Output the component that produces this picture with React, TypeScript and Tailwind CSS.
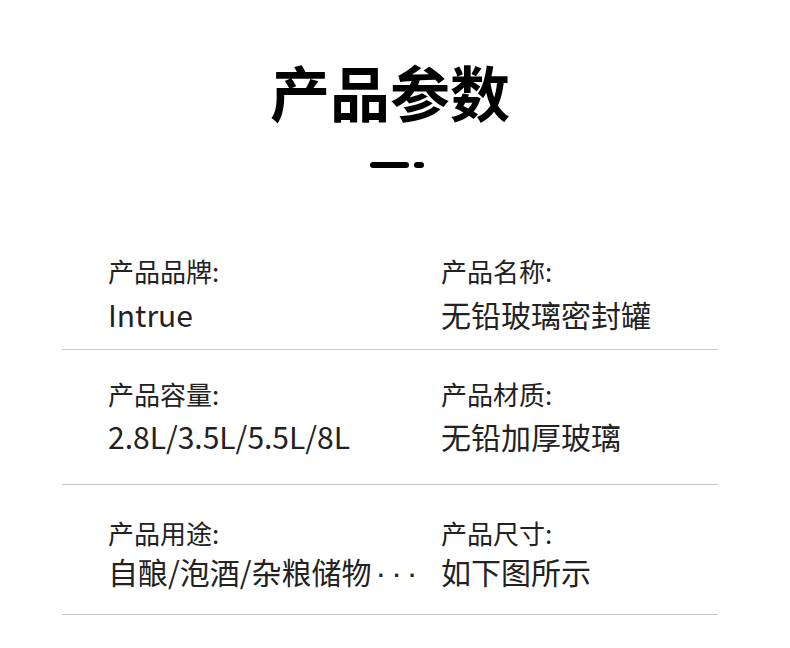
const ROWS = [
  {
    pad: 'pt-0 pb-[15px]',
    gap: 'mt-[7px]',
    cells: [
      { label: '产品品牌:', value: 'Intrue' },
      { label: '产品名称:', value: '无铅玻璃密封罐' },
    ],
  },
  {
    pad: 'pt-[28px] pb-[28px]',
    gap: 'mt-[6px]',
    cells: [
      { label: '产品容量:', value: '2.8L/3.5L/5.5L/8L' },
      { label: '产品材质:', value: '无铅加厚玻璃' },
    ],
  },
  {
    pad: 'pt-[32px] pb-[23px]',
    gap: 'mt-[2px]',
    cells: [
      { label: '产品用途:', value: '自酿/泡酒/杂粮储物', more: true },
      { label: '产品尺寸:', value: '如下图所示' },
    ],
  },
]

export default function App() {
  return (
    <div
      className="w-[790px] h-[648px] bg-white text-[#222] overflow-hidden"
      style={{ fontFamily: '"Noto Sans CJK SC", "Noto Sans", sans-serif' }}
    >
      <div className="flex flex-col items-center pt-[58px]">
        <h1 className="text-[60px] leading-[66px] font-bold text-black pr-[10px]">产品参数</h1>
        <div className="mt-[38px] flex items-center gap-[5px] ml-[4px]">
          <span className="block w-[39px] h-[6px] rounded-full bg-black" />
          <span className="block w-[10px] h-[6px] rounded-full bg-black" />
        </div>
      </div>

      <div className="ml-[62px] mr-[72px] mt-[87px]">
        {ROWS.map((row, i) => (
          <div key={i} className={`grid grid-cols-[333px_1fr] border-b border-[#c8c8c8] pl-[46px] ${row.pad}`}>
            {row.cells.map(cell => (
              <div key={cell.label} className="flex flex-col">
                <span className="text-[26px] leading-[32px]">{cell.label}</span>
                <span className={`text-[30px] leading-[40px] h-[40px] whitespace-nowrap ${row.gap}`}>
                  {cell.value}
                  {cell.more && (
                    <span className="font-['Liberation_Sans',sans-serif] text-[32px] leading-none tracking-[5px] pl-[4px]">···</span>
                  )}
                </span>
              </div>
            ))}
          </div>
        ))}
      </div>
    </div>
  )
}
